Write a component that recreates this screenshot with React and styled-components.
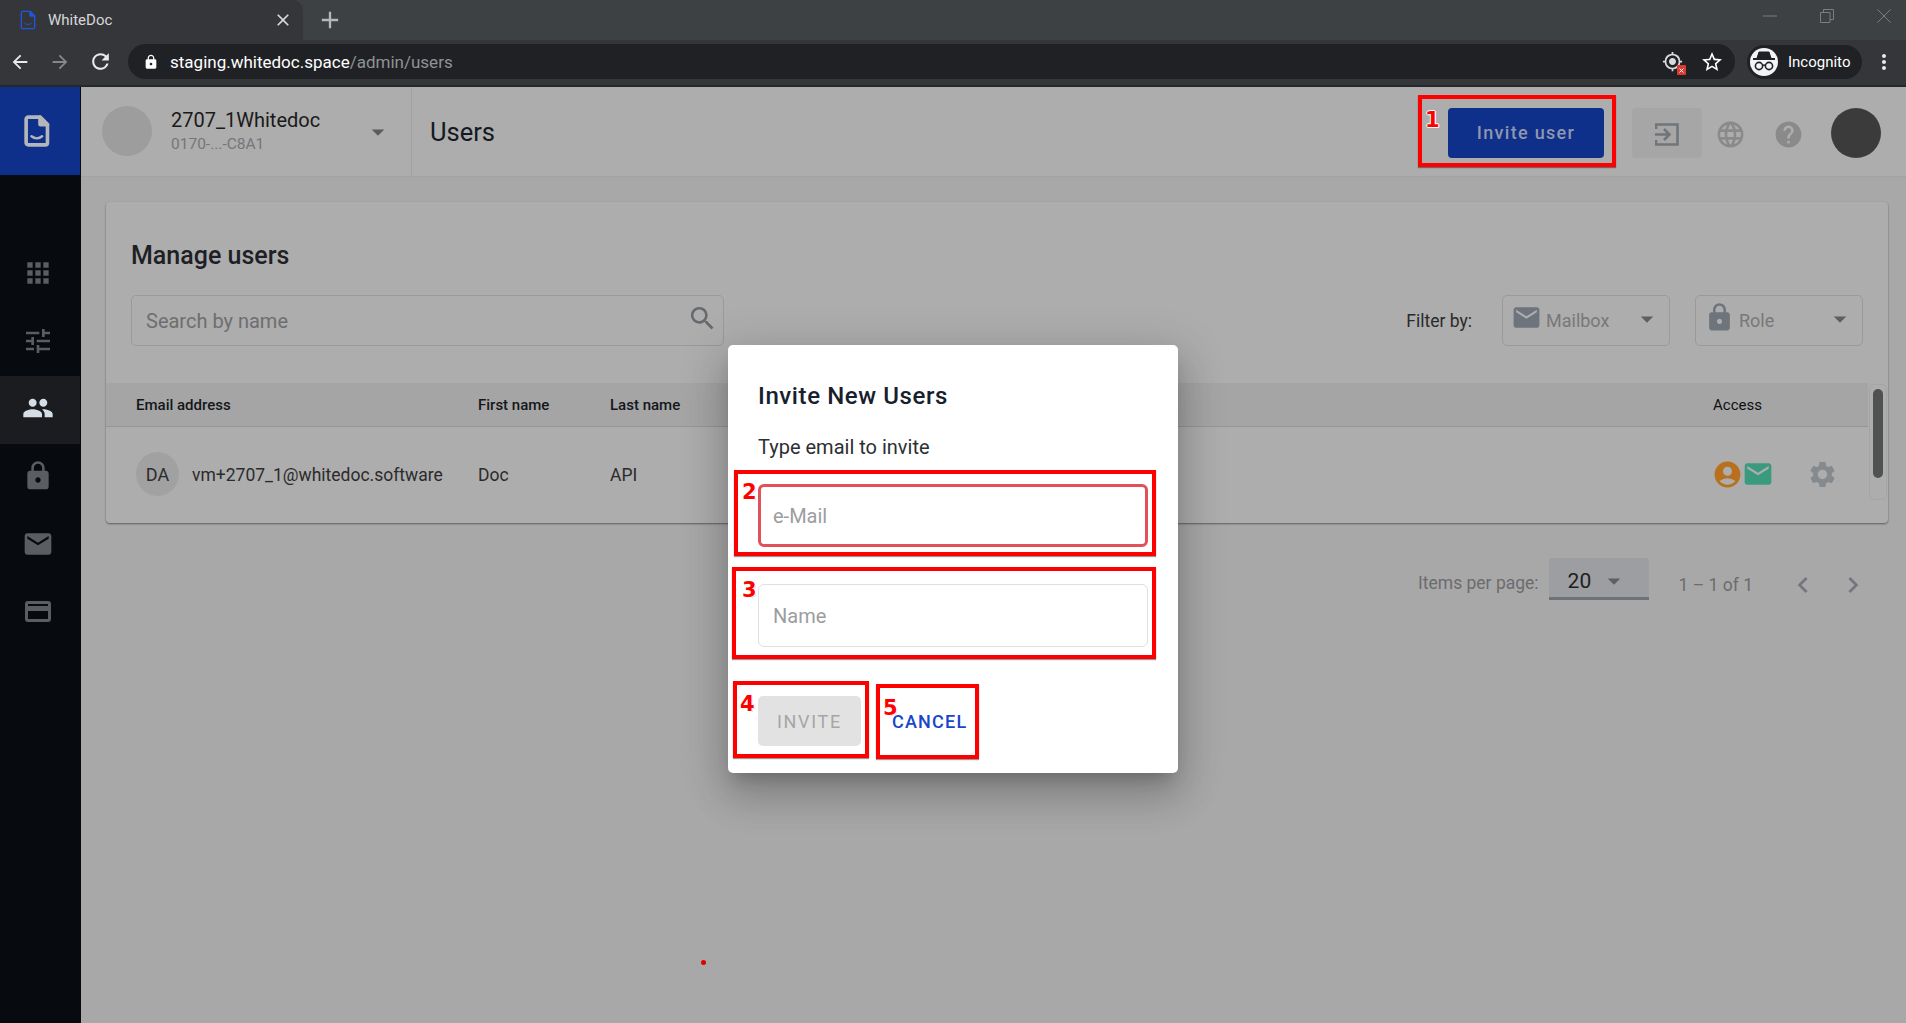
import React from 'react'
import styled, { createGlobalStyle } from 'styled-components'
import {
  MdApps, MdTune, MdPeople, MdLock, MdEmail, MdSearch, MdSettings, MdAccountCircle,
  MdLanguage, MdHelp, MdArrowDropDown, MdChevronLeft, MdChevronRight, MdArrowBack, MdArrowForward,
  MdRefresh, MdStarBorder, MdMoreVert, MdClose, MdAdd, MdGpsFixed,
} from 'react-icons/md'

const GlobalStyle = createGlobalStyle`
  html, body { margin: 0; padding: 0; height: 100%; overflow: hidden; background: #a8a8a9; }
  body { font-family: Roboto, "Liberation Sans", sans-serif; }
  * { box-sizing: border-box; }
`

const Page = styled.div`
  width: 1906px;
  height: 1023px;
  display: flex;
  flex-direction: column;
`

/* browser chrome */
const TabStrip = styled.div`
  height: 40px;
  background: #3d4144;
  display: flex;
  align-items: center;
  color: #d8dadc;
`
const Tab = styled.div`
  width: 303px;
  height: 40px;
  background: #35363a;
  border-radius: 0 10px 0 0;
  display: flex;
  align-items: center;
  padding: 0 10px 0 20px;
  font-size: 15px;
  color: #d6d8da;
`
const TabTitle = styled.span`
  margin-left: 12px;
  flex: 1;
`
const NewTab = styled.div`
  margin-left: 13px;
  display: flex;
  color: #b5b8ba;
`
const WindowControls = styled.div`
  margin-left: auto;
  display: flex;
  align-items: center;
  gap: 43px;
  padding: 0 15px 8px 0;
  color: #7b7e81;
`
const Toolbar = styled.div`
  height: 47px;
  background: #35363a;
  border-bottom: 2px solid #26272a;
  display: flex;
  align-items: center;
  padding: 0 10px 2px 0;
  color: #e8eaed;
`
const NavButton = styled.div`
  width: 40px;
  display: flex;
  justify-content: center;
  color: ${p => (p.$dim ? '#85888b' : '#e8eaed')};
`
const UrlBar = styled.div`
  width: 1607px;
  margin-left: 8px;
  height: 35px;
  border-radius: 18px;
  background: #202124;
  display: flex;
  align-items: center;
  padding: 0 11px 0 15px;
  font-size: 17px;
  color: #fff;
`
const UrlPath = styled.span`
  color: #8f9294;
`
const UrlText = styled.span`
  margin-left: 11px;
  flex: 1;
`
const BadgeWrap = styled.div`
  position: relative;
  display: flex;
  color: #d8dadc;
  margin-right: 17px;
`
const RedBadge = styled.span`
  position: absolute;
  right: -3px;
  bottom: -3px;
  width: 9px;
  height: 10px;
  background: #d93a32;
  border-radius: 1px;
  display: flex;
  align-items: center;
  justify-content: center;
`
const IncognitoPill = styled.div`
  margin-left: 12px;
  width: 115px;
  height: 34px;
  border-radius: 17px;
  background: #202124;
  display: flex;
  align-items: center;
  padding-left: 3px;
  font-size: 15px;
  color: #fff;
`
const IncognitoFace = styled.div`
  width: 28px;
  height: 28px;
  border-radius: 50%;
  background: #f1f3f4;
  display: flex;
  align-items: center;
  justify-content: center;
  margin-right: 10px;
`
const MoreButton = styled.div`
  margin-left: auto;
  display: flex;
  color: #e8eaed;
`

/* app */
const AppShell = styled.div`
  flex: 1;
  display: flex;
  position: relative;
  min-height: 0;
`
const Sidebar = styled.nav`
  width: 81px;
  background: #070a0e;
  flex-shrink: 0;
`
const LogoBlock = styled.div`
  width: 80px;
  height: 88px;
  background: #0e2f8a;
  display: flex;
  align-items: center;
  justify-content: center;
  padding-right: 6px;
  margin-bottom: 66px;
`
const SideItem = styled.div`
  width: 80px;
  height: 67.6px;
  display: flex;
  align-items: center;
  justify-content: center;
  padding: 0 5px 3px 0;
  background: ${p => (p.$active ? '#1a1c20' : 'transparent')};
  color: ${p => (p.$active ? '#d5dde6' : '#5b5d60')};
`
const Main = styled.main`
  flex: 1;
  min-width: 0;
  background: #a8a8a9;
`
const Header = styled.header`
  height: 90px;
  background: #adadad;
  border-bottom: 1px solid #a2a2a2;
  display: flex;
  align-items: center;
  position: relative;
`
const OrgSwitcher = styled.div`
  width: 331px;
  height: 100%;
  border-right: 1px solid #a2a2a2;
  display: flex;
  align-items: center;
  padding: 0 18px 2px 21px;
`
const OrgAvatar = styled.div`
  width: 50px;
  height: 50px;
  border-radius: 50%;
  background: #9d9d9e;
  margin-right: 19px;
`
const OrgText = styled.div`
  flex: 1;
`
const OrgName = styled.div`
  font-size: 20px;
  line-height: 26px;
  color: #1a1a1a;
`
const OrgId = styled.div`
  font-size: 15.5px;
  line-height: 22px;
  color: #75767a;
`
const CaretDark = styled.div`
  display: flex;
  color: #5b5b5c;
  margin-top: 2px;
`
const PageTitle = styled.h1`
  margin: 1px 0 0 18px;
  font-size: 25.5px;
  font-weight: 400;
  color: #14191f;
`
const HeaderActions = styled.div`
  margin-left: auto;
  display: flex;
  align-items: center;
  padding: 2px 25px 0 0;
`
const InviteUser = styled.button`
  width: 156px;
  height: 50px;
  border: 0;
  border-radius: 4px;
  background: #0e2f8a;
  color: #8f97ae;
  font: 500 18px Roboto, sans-serif;
  letter-spacing: 1.3px;
  margin-right: 28px;
`
const ExitBox = styled.div`
  width: 70px;
  height: 50px;
  border-radius: 4px;
  background: #a6a6a6;
  display: flex;
  align-items: center;
  justify-content: center;
  padding-top: 3px;
  margin-right: 8px;
`
const RoundAction = styled.div`
  width: 40px;
  display: flex;
  justify-content: center;
  color: #8a8a8b;
  margin: 4px 18px 0 0;
`
const UserAvatar = styled.div`
  width: 50px;
  height: 50px;
  border-radius: 50%;
  background: #3b3b3b;
  margin-left: 5px;
`
const Content = styled.div`
  padding: 25px 18px 0 25px;
`
const Card = styled.section`
  height: 321px;
  background: #adadad;
  border-radius: 4px;
  box-shadow: 0 1px 2px rgba(0, 0, 0, 0.45);
  position: relative;
`
const CardTitle = styled.h2`
  margin: 0;
  padding: 38px 25px 0;
  font-size: 25px;
  line-height: 32px;
  font-weight: 500;
  color: #1d2126;
`
const FilterRow = styled.div`
  height: 51px;
  margin: 23px 25px 37px;
  display: flex;
  align-items: center;
`
const SearchBox = styled.div`
  width: 593px;
  height: 51px;
  border: 1px solid #9a9a9b;
  border-radius: 5px;
  display: flex;
  align-items: center;
  justify-content: space-between;
  padding: 0 5px 0 14px;
  font-size: 20px;
  color: #6e6e70;
`
const SearchIcon = styled.div`
  display: flex;
  color: #66696d;
  margin-bottom: 4px;
`
const FilterLabel = styled.span`
  margin-left: auto;
  margin-right: 30px;
  font-size: 17.5px;
  color: #2a2a2b;
`
const Select = styled.div`
  width: 168px;
  height: 51px;
  margin-left: ${p => p.$gap || 0}px;
  border: 1px solid #9a9a9b;
  border-radius: 5px;
  display: flex;
  align-items: center;
  padding: 0 7px 0 8px;
  font-size: 18px;
  color: #77787b;
`
const SelectIcon = styled.div`
  display: flex;
  color: #6e747c;
  margin-top: -6px;
  margin-right: 4px;
`
const SelectLabel = styled.span`
  flex: 1;
`
const SelectCaret = styled.div`
  display: flex;
  color: #5e5f61;
  margin-top: -3px;
`
const TableHead = styled.div`
  width: 1762px;
  height: 44px;
  background: #a5a5a5;
  border-bottom: 1px solid #969696;
  display: grid;
  grid-template-columns: 342px 132px 1103px 1fr;
  align-items: center;
  padding-left: 30px;
  font-size: 15px;
  font-weight: 500;
  color: #14171b;
`
const AccessHead = styled.span`
  font-weight: 400;
  color: #0e0f10;
`
const TableRow = styled.div`
  width: 1762px;
  height: 96px;
  display: grid;
  grid-template-columns: 342px 132px 1103px 1fr;
  align-items: center;
  padding-left: 30px;
  font-size: 17.5px;
  color: #2b2b2c;
`
const EmailCell = styled.div`
  display: flex;
  align-items: center;
`
const RowAvatar = styled.div`
  width: 43px;
  height: 44px;
  border-radius: 50%;
  background: #a1a1a2;
  display: flex;
  align-items: center;
  justify-content: center;
  margin-right: 13px;
  margin-top: -2px;
  font-size: 18px;
`
const AccessCell = styled.div`
  display: flex;
  align-items: center;
  margin-top: -2px;
`
const OrangeIcon = styled.div`
  display: flex;
  margin-left: -1px;
  color: #b8701f;
`
const GreenIcon = styled.div`
  display: flex;
  margin-left: -1px;
  color: #3a9a7e;
`
const GearIcon = styled.div`
  display: flex;
  margin-left: 33px;
  color: #858a8f;
`
const ScrollTrack = styled.div`
  position: absolute;
  left: 1763px;
  top: 182px;
  width: 18px;
  height: 116px;
  border: 1px solid #a5a5a5;
  border-radius: 5px;
`
const ScrollThumb = styled.div`
  position: absolute;
  left: 3px;
  top: 4px;
  width: 10px;
  height: 89px;
  border-radius: 5px;
  background: #505252;
`
const Pagination = styled.div`
  margin-top: 34px;
  padding-right: 15px;
  display: flex;
  align-items: center;
  justify-content: flex-end;
  font-size: 17.5px;
  color: #6c6c6e;
`
const PageLabel = styled.span`
  margin-top: 8px;
`
const PageSize = styled.div`
  width: 100px;
  height: 42px;
  margin: 0 30px 0 10px;
  background: #9d9ea2;
  border-bottom: 3px solid #6e7177;
  border-radius: 3px 3px 0 0;
  display: flex;
  align-items: center;
  padding: 7px 0 0 19px;
  font-size: 21px;
  color: #1e1e20;
`
const PageCaret = styled.div`
  display: flex;
  margin-left: 8px;
  color: #5e5f61;
`
const PageRange = styled.span`
  margin-right: 30px;
  margin-top: 11px;
`
const PageArrow = styled.div`
  width: 40px;
  display: flex;
  justify-content: center;
  margin-top: 12px;
  margin-left: ${p => p.$gap || 0}px;
  color: #73767b;
`

/* invite dialog */
const ModalLayer = styled.div`
  position: absolute;
  inset: 0;
  display: flex;
  justify-content: center;
  align-items: center;
  padding-top: 8px;
`
const Modal = styled.div`
  width: 450px;
  height: 428px;
  position: relative;
  padding: 35px 30px 27px;
  background: #fff;
  border-radius: 5px;
  box-shadow: 0 11px 15px -7px rgba(0, 0, 0, 0.2), 0 24px 38px 3px rgba(0, 0, 0, 0.14), 0 9px 46px 8px rgba(0, 0, 0, 0.12);
`
const ModalTitle = styled.h3`
  margin: 0;
  font-size: 24px;
  line-height: 32px;
  font-weight: 500;
  letter-spacing: 0.6px;
  color: #17202c;
`
const ModalHint = styled.p`
  margin: 21px 0 23px;
  font-size: 20px;
  line-height: 28px;
  color: #2c2f33;
`
const Field = styled.div`
  height: 63px;
  margin-bottom: ${p => p.$gap || 0}px;
  border: ${p => (p.$error ? '3px solid #e2505a' : '1px solid #dfe0e2')};
  border-radius: 6px;
  display: flex;
  align-items: center;
  padding: 0 ${p => (p.$error ? 12 : 14)}px;
  font-size: 20px;
  color: #9b9da0;
`
const ModalActions = styled.div`
  margin-top: 49px;
  display: flex;
  align-items: center;
  gap: 15px;
`
const DisabledButton = styled.button`
  width: 103px;
  height: 50px;
  border: 0;
  border-radius: 5px;
  background: #e2e2e2;
  color: #a6a6a6;
  font: 400 18px Roboto, sans-serif;
  letter-spacing: 1.7px;
`
const TextButton = styled.button`
  height: 50px;
  border: 0;
  padding: 0 16px;
  background: none;
  color: #1746c9;
  font: 500 18px Roboto, sans-serif;
  letter-spacing: 1.2px;
`

/* red marks painted on top of the screenshot */
const MarkBox = styled.div`
  position: absolute;
  left: ${p => p.$x}px;
  top: ${p => p.$y}px;
  width: ${p => p.$w}px;
  height: ${p => p.$h}px;
  border: 4px solid #fe0000;
  box-shadow: 0 1px 1px rgba(0, 0, 0, 0.4);
  pointer-events: none;
`
const MarkNumber = styled.span`
  position: absolute;
  left: ${p => p.$x}px;
  top: ${p => p.$y}px;
  font: 700 21px/22px "DejaVu Sans", sans-serif;
  color: #fe0000;
  text-shadow: -1px 0 #fff, 1px 0 #fff, 0 -1px #fff, 0 1px #fff, 1px 1px #ccc;
`
const RedDot = styled.span`
  position: absolute;
  left: 701px;
  top: 873px;
  width: 5px;
  height: 5px;
  border-radius: 50%;
  background: #e00000;
`

const DocLogo = ({ size, color, w = 3 }) => (
  <svg width={size * 0.8} height={size} viewBox="0 0 24 30" fill="none" stroke={color} strokeWidth={w} strokeLinejoin="round">
    <path d="M4 2h11l7 7v17a2 2 0 0 1-2 2H4a2 2 0 0 1-2-2V4a2 2 0 0 1 2-2z" />
    <path d="M15 2l7 7h-7z" fill={color} />
    <path d="M7 20c3 2.4 7 2.4 10 0" strokeLinecap="round" strokeWidth={w * 0.7} />
  </svg>
)

const ExitIcon = () => (
  <svg width="24" height="23" viewBox="0 0 24 23" fill="none" stroke="#70757a" strokeWidth="2.6">
    <path d="M1 6V1.5h21.5v20H1V17" />
    <path d="M0 11.5h14M9 6l5.5 5.5L9 17" />
  </svg>
)

const RestoreIcon = () => (
  <svg width="14" height="14" viewBox="0 0 14 14" fill="none" stroke="currentColor" strokeWidth="1">
    <path d="M.5 3.5h9.5v10H.5zM3.5 3.5V.5h10v10H10" />
  </svg>
)

const ThinClose = () => (
  <svg width="14" height="14" viewBox="0 0 14 14" fill="none" stroke="currentColor" strokeWidth="1">
    <path d="M.5.5l13 13M13.5.5l-13 13" />
  </svg>
)

const IncognitoIcon = () => (
  <svg width="24" height="22" viewBox="0 0 24 22" fill="none" stroke="#202124">
    <path d="M7 1h10l2 6H5z" fill="#202124" />
    <path d="M1 8h22" strokeWidth="2" />
    <circle cx="7" cy="15" r="3.6" strokeWidth="1.6" />
    <circle cx="17" cy="15" r="3.6" strokeWidth="1.6" />
    <path d="M10.5 14.5c1-.7 2-.7 3 0" strokeWidth="1.4" />
  </svg>
)

// outlined box with a band across the upper half, as in the last sidebar entry
const CardBandIcon = ({ size }) => (
  <svg width={size} height={size} viewBox="0 0 32 32" fill="none" stroke="currentColor">
    <rect x="4.5" y="7.5" width="23" height="18" rx="1.5" strokeWidth="3" />
    <path d="M4 13.5h24" strokeWidth="5" />
  </svg>
)

const sideIcons = [MdApps, MdTune, MdPeople, MdLock, MdEmail, CardBandIcon]

export default function App() {
  return (
    <Page>
      <GlobalStyle />
      <TabStrip>
        <Tab>
          <DocLogo size={20} color="#1f55e0" w={2} />
          <TabTitle>WhiteDoc</TabTitle>
          <MdClose size={20} />
        </Tab>
        <NewTab><MdAdd size={28} /></NewTab>
        <WindowControls>
          <svg width="14" height="2"><path d="M0 1h14" stroke="currentColor" /></svg>
          <RestoreIcon />
          <ThinClose />
        </WindowControls>
      </TabStrip>
      <Toolbar>
        <NavButton><MdArrowBack size={22} /></NavButton>
        <NavButton $dim><MdArrowForward size={22} /></NavButton>
        <NavButton><MdRefresh size={25} /></NavButton>
        <UrlBar>
          <MdLock size={16} />
          <UrlText>staging.whitedoc.space<UrlPath>/admin/users</UrlPath></UrlText>
          <BadgeWrap>
            <MdGpsFixed size={21} />
            <RedBadge>
              <svg width="5" height="5" viewBox="0 0 5 5" stroke="#fff"><path d="M.5.5l4 4M4.5.5l-4 4" /></svg>
            </RedBadge>
          </BadgeWrap>
          <MdStarBorder size={24} />
        </UrlBar>
        <IncognitoPill>
          <IncognitoFace><IncognitoIcon /></IncognitoFace>
          Incognito
        </IncognitoPill>
        <MoreButton><MdMoreVert size={24} /></MoreButton>
      </Toolbar>

      <AppShell>
        <Sidebar>
          <LogoBlock><DocLogo size={32} color="#b4b6ba" w={3.4} /></LogoBlock>
          {sideIcons.map((Icon, i) => (
            <SideItem key={i} $active={i === 2}><Icon size={32} /></SideItem>
          ))}
        </Sidebar>
        <Main>
          <Header>
            <OrgSwitcher>
              <OrgAvatar />
              <OrgText>
                <OrgName>2707_1Whitedoc</OrgName>
                <OrgId>0170-...-C8A1</OrgId>
              </OrgText>
              <CaretDark><MdArrowDropDown size={30} /></CaretDark>
            </OrgSwitcher>
            <PageTitle>Users</PageTitle>
            <HeaderActions>
              <InviteUser>Invite user</InviteUser>
              <ExitBox><ExitIcon /></ExitBox>
              <RoundAction><MdLanguage size={31} /></RoundAction>
              <RoundAction><MdHelp size={31} /></RoundAction>
              <UserAvatar />
            </HeaderActions>
            <MarkBox $x={1337} $y={8} $w={198} $h={72} />
            <MarkNumber $x={1344} $y={22}>1</MarkNumber>
          </Header>
          <Content>
            <Card>
              <CardTitle>Manage users</CardTitle>
              <FilterRow>
                <SearchBox>
                  Search by name
                  <SearchIcon><MdSearch size={31} /></SearchIcon>
                </SearchBox>
                <FilterLabel>Filter by:</FilterLabel>
                <Select>
                  <SelectIcon><MdEmail size={31} /></SelectIcon>
                  <SelectLabel>Mailbox</SelectLabel>
                  <SelectCaret><MdArrowDropDown size={30} /></SelectCaret>
                </Select>
                <Select $gap={25}>
                  <SelectIcon><MdLock size={31} /></SelectIcon>
                  <SelectLabel>Role</SelectLabel>
                  <SelectCaret><MdArrowDropDown size={30} /></SelectCaret>
                </Select>
              </FilterRow>
              <TableHead>
                <span>Email address</span>
                <span>First name</span>
                <span>Last name</span>
                <AccessHead>Access</AccessHead>
              </TableHead>
              <TableRow>
                <EmailCell>
                  <RowAvatar>DA</RowAvatar>
                  vm+2707_1@whitedoc.software
                </EmailCell>
                <span>Doc</span>
                <span>API</span>
                <AccessCell>
                  <OrangeIcon><MdAccountCircle size={31} /></OrangeIcon>
                  <GreenIcon><MdEmail size={32} /></GreenIcon>
                  <GearIcon><MdSettings size={31} /></GearIcon>
                </AccessCell>
              </TableRow>
              <ScrollTrack><ScrollThumb /></ScrollTrack>
            </Card>
            <Pagination>
              <PageLabel>Items per page:</PageLabel>
              <PageSize>
                20
                <PageCaret><MdArrowDropDown size={30} /></PageCaret>
              </PageSize>
              <PageRange>1 – 1 of 1</PageRange>
              <PageArrow><MdChevronLeft size={32} /></PageArrow>
              <PageArrow $gap={10}><MdChevronRight size={32} /></PageArrow>
            </Pagination>
          </Content>
        </Main>

        <ModalLayer>
          <Modal>
            <ModalTitle>Invite New Users</ModalTitle>
            <ModalHint>Type email to invite</ModalHint>
            <Field $error $gap={37}>e-Mail</Field>
            <Field>Name</Field>
            <ModalActions>
              <DisabledButton disabled>INVITE</DisabledButton>
              <TextButton>CANCEL</TextButton>
            </ModalActions>
            <MarkBox $x={6} $y={125} $w={422} $h={86} />
            <MarkNumber $x={14} $y={136}>2</MarkNumber>
            <MarkBox $x={4} $y={222} $w={424} $h={92} />
            <MarkNumber $x={14} $y={234}>3</MarkNumber>
            <MarkBox $x={5} $y={336} $w={136} $h={77} />
            <MarkNumber $x={12} $y={348}>4</MarkNumber>
            <MarkBox $x={148} $y={339} $w={103} $h={75} />
            <MarkNumber $x={155} $y={352}>5</MarkNumber>
          </Modal>
        </ModalLayer>
        <RedDot />
      </AppShell>
    </Page>
  )
}
